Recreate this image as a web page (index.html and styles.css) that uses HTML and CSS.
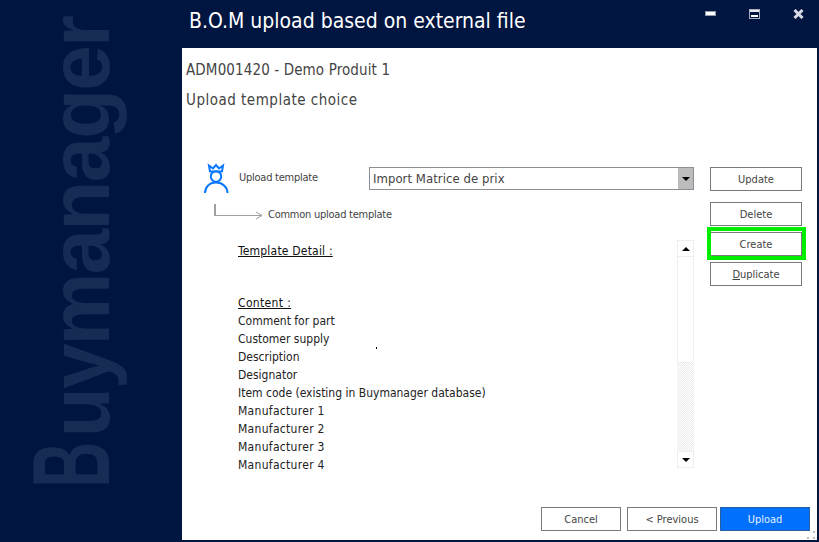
FILE: index.html
```html
<!DOCTYPE html>
<html lang="en">
<head>
<meta charset="utf-8">
<title>B.O.M upload based on external file</title>
<link rel="stylesheet" href="styles.css">
</head>
<body>
<div class="window">
  <aside class="sidebar"><span class="brand"><span class="brand-b">B</span>uymanager</span></aside>
  <div class="main">
    <header class="titlebar">
      <h1 class="title">B.O.M upload based on external file</h1>
      <div class="controls">
        <svg class="ctl" width="11" height="6" viewBox="0 0 11 6"><rect x="0.5" y="0.5" width="10" height="4" fill="#fff" stroke="#8f97a8"/></svg>
        <svg class="ctl" width="11" height="10" viewBox="0 0 11 10"><rect x="0.5" y="0.5" width="10" height="9" fill="#001540" stroke="#a9afbc"/><rect x="1" y="1" width="9" height="2" fill="#e8e8ee"/><rect x="2" y="6" width="7" height="2" fill="#fff"/></svg>
        <svg class="ctl" width="11" height="10" viewBox="0 0 11 10"><path d="M1.5 1 L9.5 9 M9.5 1 L1.5 9" stroke="#d8dbe2" stroke-width="3"/></svg>
      </div>
    </header>
    <section class="panel">
      <p class="ref">ADM001420 - Demo Produit 1</p>
      <p class="step">Upload template choice</p>
      <div class="body">
        <div class="left">
          <div class="template-row">
            <svg class="user" width="26" height="31" viewBox="0 0 26 31" fill="none" stroke="#0a78ff" stroke-width="2">
              <path d="M7 8.5 L6 2.5 L10 5.5 L13 2 L16 5.5 L20 2.5 L19 8.5 Z"/>
              <circle cx="13" cy="13.5" r="5.2"/>
              <path d="M2 30 C2 24.5 6 19.5 13 19.5 C20 19.5 24.5 24.5 24.5 30"/>
            </svg>
            <span class="lbl">Upload template</span>
            <div class="select"><span class="select-text">Import Matrice de prix</span><span class="select-btn"><i class="tri-down"></i></span></div>
          </div>
          <div class="common-row">
            <svg class="arrow" width="54" height="17" viewBox="0 0 54 17" fill="none"><path d="M1 0 V12" stroke="#a0a0a0" stroke-width="2"/><path d="M1 11.5 H47" stroke="#a0a0a0"/><path d="M42 8 L48 11.5 L42 15" stroke="#a0a0a0"/></svg>
            <span class="lbl">Common upload template</span>
          </div>
          <div class="detail">
            <div class="text">
              <div class="line head first"><u>Template Detail :</u></div>
              <div class="line head second"><u>Content :</u></div>
              <div class="line">Comment for part</div>
              <div class="line">Customer supply</div>
              <div class="line">Description</div>
              <div class="line">Designator</div>
              <div class="line">Item code (existing in Buymanager database)</div>
              <div class="line wide">Manufacturer 1</div>
              <div class="line wide">Manufacturer 2</div>
              <div class="line wide">Manufacturer 3</div>
              <div class="line wide">Manufacturer 4</div>
              <i class="speck"></i>
            </div>
            <div class="scrollbar">
              <span class="sb-btn"><i class="tri-up"></i></span>
              <span class="sb-thumb"></span>
              <span class="sb-track"></span>
              <span class="sb-btn"><i class="tri-down"></i></span>
            </div>
          </div>
        </div>
        <div class="actions">
          <button class="btn btn-update">Update</button>
          <button class="btn btn-delete">Delete</button>
          <button class="btn btn-create">Create</button>
          <button class="btn btn-duplicate"><u>D</u>uplicate</button>
        </div>
      </div>
      <footer class="footer">
        <button class="btn btn-cancel">Cancel</button>
        <button class="btn btn-prev">&lt; Previous</button>
        <button class="btn btn-primary">Upload</button>
      </footer>
      <svg class="grip" width="9" height="9" viewBox="0 0 9 9" fill="#bdbdbd"><rect x="6" y="0" width="2" height="2"/><rect x="0" y="6" width="2" height="2"/><rect x="6" y="6" width="2" height="2"/></svg>
    </section>
  </div>
</div>
</body>
</html>
```
FILE: styles.css
```css
* , *::after { box-sizing: border-box; }
html, body { margin: 0; padding: 0; }
body { width: 819px; height: 542px; overflow: hidden; background: #001540; font-family: "DejaVu Sans Condensed", "DejaVu Sans", sans-serif; color: #444; }
.window { display: flex; width: 819px; height: 542px; }
.sidebar { width: 182px; flex: none; position: relative; overflow: hidden; }
.brand { position: absolute; left: 30px; top: 484px; font-family: "Liberation Sans", sans-serif; font-weight: bold; font-size: 85px; line-height: 100px; height: 100px; color: #172c55; white-space: nowrap; transform-origin: 0 0; transform: rotate(-90deg) scaleX(0.965); letter-spacing: -2px; }
.brand-b { display: inline-block; font-size: 110px; line-height: 1px; letter-spacing: 0; transform-origin: 0 100%; transform: scaleX(0.6); margin-left: -4px; margin-right: -27px; }
.main { flex: 1; display: flex; flex-direction: column; padding: 0 2px 2px 0; }
.titlebar { height: 48px; flex: none; display: flex; justify-content: space-between; align-items: flex-start; }
.title { margin: 8px 0 0 7px; font-size: 21px; line-height: 26px; font-weight: normal; color: #fff; }
.controls { display: flex; align-items: center; gap: 33px; margin: 9px 13px 0 0; height: 10px; }
.panel { flex: 1; background: #fff; display: flex; flex-direction: column; position: relative; padding: 12px 7px 9px 4px; }
.ref, .step { margin: 0; font-size: 15px; line-height: 20px; color: #444; }
.ref { letter-spacing: 0.12px; }
.step { margin-top: 10px; letter-spacing: 0.5px; }
.body { flex: 1; display: flex; margin-top: 57px; }
.left { width: 508px; flex: none; }
.template-row { display: flex; align-items: flex-start; height: 35px; }
.user { margin: -4px 0 0 17px; flex: none; }
.lbl { font-size: 11px; line-height: 14px; color: #444; letter-spacing: -0.25px; }
.template-row .lbl { margin: 4px 0 0 10px; width: 130px; }
.select { width: 325px; height: 23px; border: 1px solid #8a8f96; display: flex; align-items: center; justify-content: space-between; }
.select-text { font-size: 13px; padding-left: 3px; letter-spacing: 0.05px; }
.select-btn { width: 15px; height: 21px; background: #bcbcbc; display: flex; align-items: center; justify-content: center; }
.tri-down, .tri-up { display: block; width: 0; height: 0; border-left: 4px solid transparent; border-right: 4px solid transparent; }
.tri-down { border-top: 4px solid #000; }
.tri-up { border-bottom: 4px solid #000; }
.common-row { display: flex; align-items: flex-start; height: 40px; margin-left: 28px; padding-top: 2px; }
.common-row .lbl { margin: 4px 0 0 0; }
.detail { display: flex; }
.text { width: 491px; padding-left: 52px; position: relative; height: 228px; }
.line { font-size: 12px; line-height: 18px; color: #222; white-space: nowrap; }
.head { color: #111; letter-spacing: 0.2px; }
.head.second { letter-spacing: 0.35px; }
.wide { letter-spacing: 0.3px; }
.first { margin-top: 0; }
.second { margin-top: 34px; }
.speck { position: absolute; left: 190px; top: 105px; width: 1px; height: 2px; background: #000; }
.scrollbar { width: 17px; height: 228px; margin-top: -2px; display: flex; flex-direction: column; }
.sb-btn { height: 17px; border: 1px solid #eee; display: flex; align-items: center; justify-content: center; background: #fff; flex: none; }
.sb-thumb { height: 106px; border: 1px solid #eee; border-top: 0; flex: none; }
.sb-track { flex: 1; background-image: repeating-conic-gradient(#ececec 0 25%, #fff 0 50%); background-size: 2px 2px; }
.actions { width: 92px; margin-left: 16px; display: flex; flex-direction: column; flex: none; }
.btn { display: block; height: 24px; width: 92px; padding: 0; border: 1px solid #7a7a7a; background: #fff; font-family: inherit; font-size: 11px; color: #444; text-align: center; }
.btn-delete { margin-top: 11px; }
.btn-create { margin-top: 6px; position: relative; }
.btn-create::after { content: ""; position: absolute; left: -4px; top: -6px; width: 99px; height: 33px; border: 4px solid #00ee00; }
.btn-duplicate { margin-top: 6px; }
.footer { display: flex; justify-content: flex-end; margin-top: auto; }
.footer .btn-cancel { width: 80px; }
.footer .btn-prev { width: 90px; margin-left: 6px; }
.footer .btn-primary { width: 90px; margin-left: 3px; background: #0070ff; color: #e6f0ff; border-color: #2b5e9e; }
.grip { position: absolute; right: 1px; bottom: 0; }
```
